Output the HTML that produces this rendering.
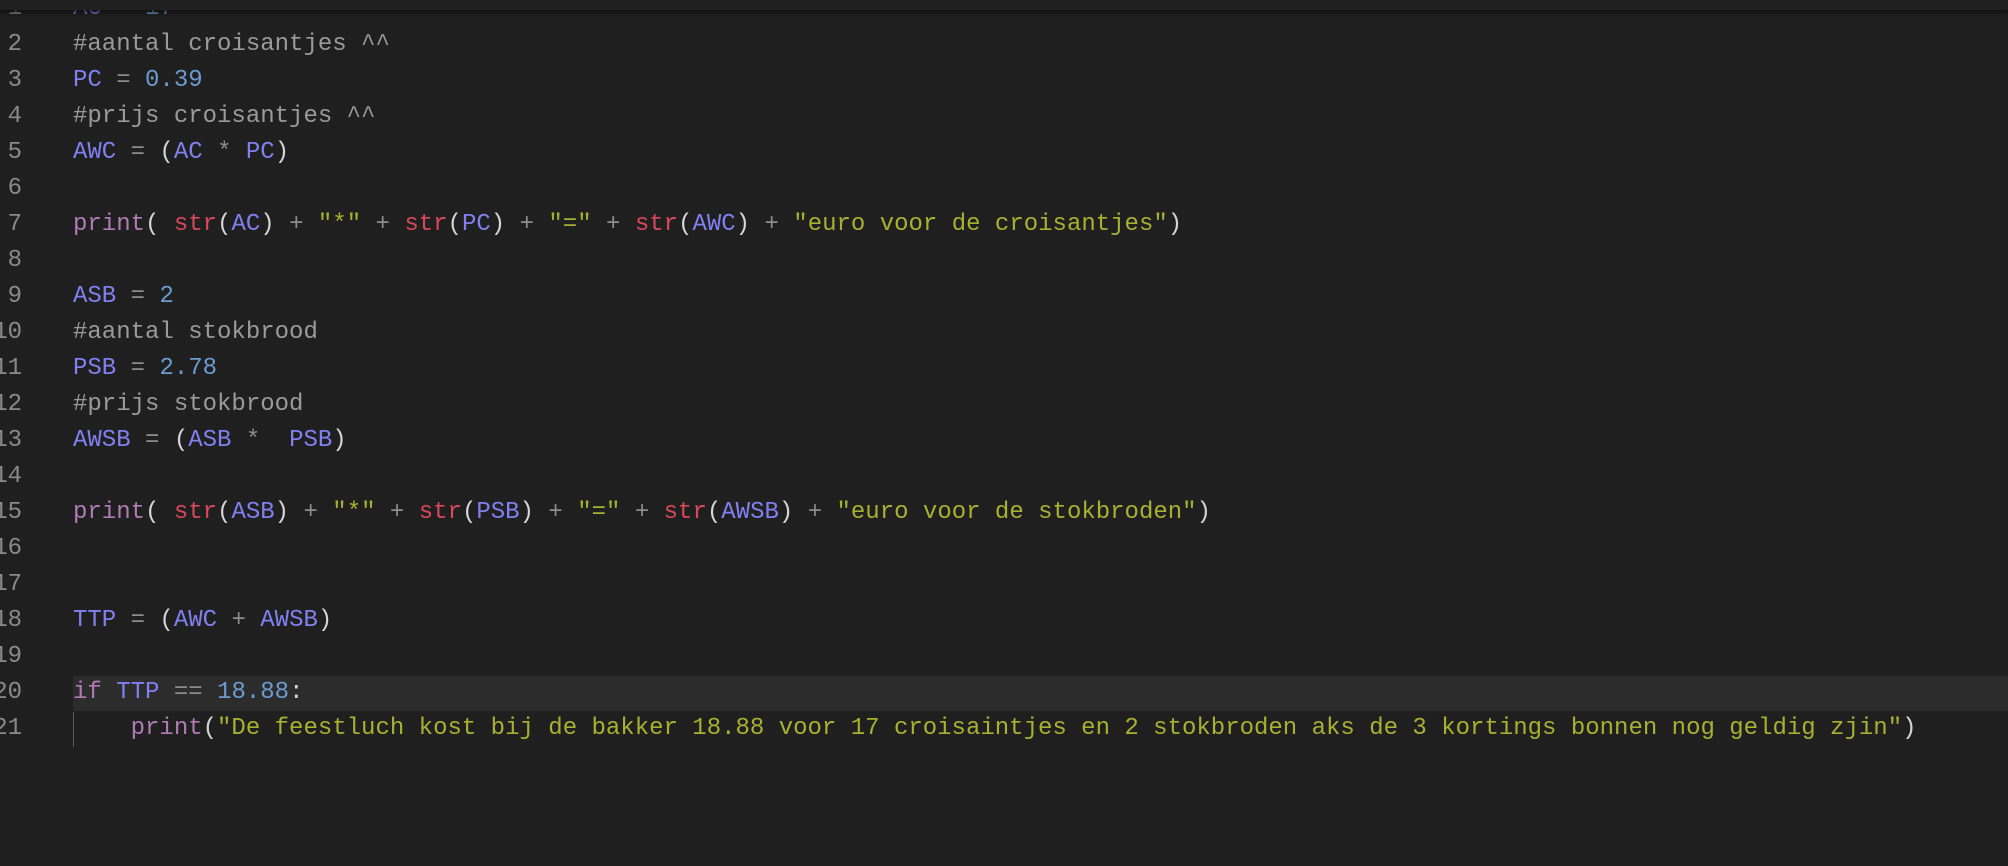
<!DOCTYPE html>
<html><head><style>
html,body{margin:0;padding:0;width:2008px;height:866px;overflow:hidden;background:#1f1f1f;}
.top{position:absolute;left:0;top:0;width:2008px;height:10px;background:#202020;box-shadow:0 2px 6px #0c0c0c;z-index:3;}
.hl{position:absolute;left:73px;top:676px;width:1935px;height:35px;background:#2c2c2c;}
.guide{position:absolute;left:73px;top:712px;width:1px;height:35px;background:#5a5a4a;}
.ln{position:absolute;left:-8px;width:30px;text-align:right;font:24px/36px "Liberation Mono",monospace;color:#8a8a8a;}
.c{position:absolute;left:73px;font:24px/36px "Liberation Mono",monospace;color:#d4d4d4;white-space:pre;}
.v{color:#8080f0}.n{color:#6b9bd1}.m{color:#9a9a9a}.o{color:#8c8c8c}.p{color:#b07ab4}.s{color:#d9485a}.q{color:#a8b030}
</style></head><body>
<div class="top"></div>
<div class="hl"></div><div class="guide"></div>
<div class="ln" style="top:-9px">1</div><div class="c" style="top:-9px"><span class="v">AC</span> <span class="o">=</span> <span class="n">17</span></div>
<div class="ln" style="top:27px">2</div><div class="c m" style="top:27px">#aantal croisantjes ^^</div>
<div class="ln" style="top:63px">3</div><div class="c" style="top:63px"><span class="v">PC</span> <span class="o">=</span> <span class="n">0.39</span></div>
<div class="ln" style="top:99px">4</div><div class="c m" style="top:99px">#prijs croisantjes ^^</div>
<div class="ln" style="top:135px">5</div><div class="c" style="top:135px"><span class="v">AWC</span> <span class="o">=</span> (<span class="v">AC</span> <span class="o">*</span> <span class="v">PC</span>)</div>
<div class="ln" style="top:171px">6</div>
<div class="ln" style="top:207px">7</div><div class="c" style="top:207px"><span class="p">print</span>( <span class="s">str</span>(<span class="v">AC</span>) <span class="o">+</span> <span class="q">"*"</span> <span class="o">+</span> <span class="s">str</span>(<span class="v">PC</span>) <span class="o">+</span> <span class="q">"="</span> <span class="o">+</span> <span class="s">str</span>(<span class="v">AWC</span>) <span class="o">+</span> <span class="q">"euro voor de croisantjes"</span>)</div>
<div class="ln" style="top:243px">8</div>
<div class="ln" style="top:279px">9</div><div class="c" style="top:279px"><span class="v">ASB</span> <span class="o">=</span> <span class="n">2</span></div>
<div class="ln" style="top:315px">10</div><div class="c m" style="top:315px">#aantal stokbrood</div>
<div class="ln" style="top:351px">11</div><div class="c" style="top:351px"><span class="v">PSB</span> <span class="o">=</span> <span class="n">2.78</span></div>
<div class="ln" style="top:387px">12</div><div class="c m" style="top:387px">#prijs stokbrood</div>
<div class="ln" style="top:423px">13</div><div class="c" style="top:423px"><span class="v">AWSB</span> <span class="o">=</span> (<span class="v">ASB</span> <span class="o">*</span>  <span class="v">PSB</span>)</div>
<div class="ln" style="top:459px">14</div>
<div class="ln" style="top:495px">15</div><div class="c" style="top:495px"><span class="p">print</span>( <span class="s">str</span>(<span class="v">ASB</span>) <span class="o">+</span> <span class="q">"*"</span> <span class="o">+</span> <span class="s">str</span>(<span class="v">PSB</span>) <span class="o">+</span> <span class="q">"="</span> <span class="o">+</span> <span class="s">str</span>(<span class="v">AWSB</span>) <span class="o">+</span> <span class="q">"euro voor de stokbroden"</span>)</div>
<div class="ln" style="top:531px">16</div>
<div class="ln" style="top:567px">17</div>
<div class="ln" style="top:603px">18</div><div class="c" style="top:603px"><span class="v">TTP</span> <span class="o">=</span> (<span class="v">AWC</span> <span class="o">+</span> <span class="v">AWSB</span>)</div>
<div class="ln" style="top:639px">19</div>
<div class="ln" style="top:675px">20</div><div class="c" style="top:675px"><span class="p">if</span> <span class="v">TTP</span> <span class="o">==</span> <span class="n">18.88</span>:</div>
<div class="ln" style="top:711px">21</div><div class="c" style="top:711px">    <span class="p">print</span>(<span class="q">"De feestluch kost bij de bakker 18.88 voor 17 croisaintjes en 2 stokbroden aks de 3 kortings bonnen nog geldig zjin"</span>)</div>
</body></html>
